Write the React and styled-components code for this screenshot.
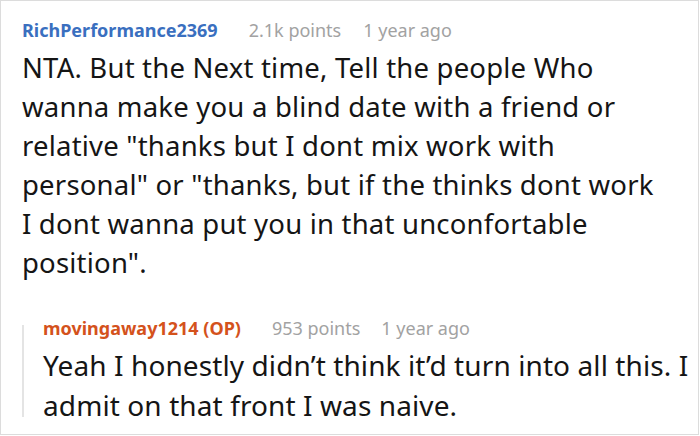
import React from "react";
import styled, { createGlobalStyle } from "styled-components";

const Global = createGlobalStyle`
  html, body { margin: 0; padding: 0; background: #fff; }
  body { font-family: "Noto Sans", "Open Sans", sans-serif; }
`;

const Frame = styled.div`
  box-sizing: border-box;
  width: 699px;
  height: 435px;
  border: 1px solid #dcdcdc;
  background: #fff;
  padding: 17px 0 0 21px;
  overflow: hidden;
`;

const Comment = styled.div`
  display: flex;
  flex-direction: column;
`;

const Meta = styled.div`
  display: flex;
  align-items: baseline;
  font-size: 18px;
  line-height: 24px;
  white-space: nowrap;
`;

const Author = styled.span`
  font-weight: 700;
  color: ${(p) => p.$color};
  margin-right: 31px;
`;

const Info = styled.span`
  color: #a2a2a2;
  margin-right: ${(p) => p.$mr || 0}px;
`;

const Body = styled.p`
  margin: ${(p) => p.$mt}px 0 0;
  font-size: ${(p) => p.$size}px;
  line-height: ${(p) => p.$lh}px;
  letter-spacing: ${(p) => p.$ls || 0}px;
  color: #151515;
  white-space: nowrap;
`;

const Reply = styled.div`
  position: relative;
  margin-top: 34px;
  padding-left: 21px;
  display: flex;
  flex-direction: column;

  &::before {
    content: "";
    position: absolute;
    left: 0;
    top: 9px;
    height: 92px;
    width: 2px;
    background: #e4e4e4;
  }
`;

export default function App() {
  return (
    <>
      <Global />
      <Frame>
        <Comment>
          <Meta>
            <Author $color="#3a6fbf">RichPerformance2369</Author>
            <Info $mr={22}>2.1k points</Info>
            <Info>1 year ago</Info>
          </Meta>
          <Body $mt={6} $size={27.5} $lh={39} $ls={0.2}>
            NTA. But the Next time, Tell the people Who
            <br />
            wanna make you a blind date with a friend or
            <br />
            relative "thanks but I dont mix work with
            <br />
            personal" or "thanks, but if the thinks dont work
            <br />
            I dont wanna put you in that unconfortable
            <br />
            position".
          </Body>
        </Comment>
        <Reply>
          <Meta>
            <Author $color="#d4521c">movingaway1214 (OP)</Author>
            <Info $mr={21}>953 points</Info>
            <Info>1 year ago</Info>
          </Meta>
          <Body $mt={5} $size={28} $lh={40} $ls={0.1}>
            Yeah I honestly didn’t think it’d turn into all this. I
            <br />
            admit on that front I was naive.
          </Body>
        </Reply>
      </Frame>
    </>
  );
}
